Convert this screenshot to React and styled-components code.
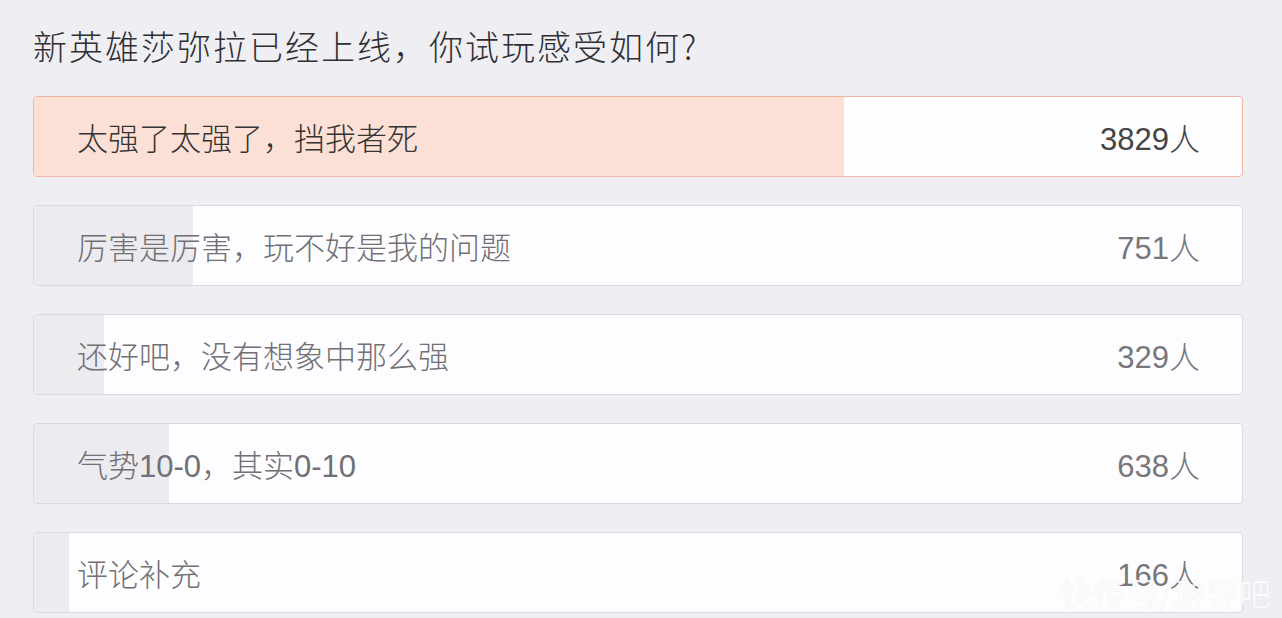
import styled, { createGlobalStyle } from "styled-components";

const GlobalStyle = createGlobalStyle`
  html, body {
    margin: 0;
    padding: 0;
    background: #efeff3;
    font-family: "Noto Sans CJK SC", "Noto Sans", sans-serif;
    overflow: hidden;
  }
`;

const Page = styled.div`
  position: relative;
  width: 1282px;
  height: 618px;
  padding: 22px 0 0 33px;
  box-sizing: border-box;
`;

const Title = styled.h1`
  margin: 0 0 26px;
  font-size: 34px;
  line-height: 48px;
  font-weight: 300;
  color: #2f2f33;
  letter-spacing: 2px;
`;

const List = styled.div`
  display: flex;
  flex-direction: column;
  gap: 28px;
  width: 1210px;
`;

const Option = styled.div`
  position: relative;
  height: 81px;
  box-sizing: border-box;
  border: 1.5px solid ${p => (p.top ? "#efb7a3" : "#d9d9df")};
  border-radius: 4px;
  background: #fdfcfe;
  overflow: hidden;
  display: flex;
  align-items: center;
  justify-content: space-between;
  padding: 0 42px 0 43px;
  font-family: "Liberation Sans", "Noto Sans CJK SC", sans-serif;
`;

const Fill = styled.div`
  position: absolute;
  left: 0;
  top: 0;
  bottom: 0;
  background: ${p => (p.top ? "#fde0d5" : "#ebebf0")};
`;

const Label = styled.span`
  position: relative;
  font-size: 31px;
  font-weight: 300;
  color: ${p => (p.top ? "#333" : "#707075")};
`;

const Count = styled.span`
  position: relative;
  font-size: 31px;
  font-weight: 300;
  color: ${p => (p.top ? "#444" : "#77777b")};
`;

const Watermark = styled.div`
  position: absolute;
  right: 10px;
  bottom: 3px;
  font-size: 32px;
  color: rgba(255, 255, 255, 0.9);
  text-shadow: 0 0 1px rgba(120, 120, 130, 0.2);
  letter-spacing: 1px;
`;

const options = [
  { label: "太强了太强了，挡我者死", count: 3829 },
  { label: "厉害是厉害，玩不好是我的问题", count: 751 },
  { label: "还好吧，没有想象中那么强", count: 329 },
  { label: "气势10-0，其实0-10", count: 638 },
  { label: "评论补充", count: 166 },
];

export default function App() {
  const total = options.reduce((s, o) => s + o.count, 0);
  return (
    <Page>
      <GlobalStyle />
      <Title>新英雄莎弥拉已经上线，你试玩感受如何?</Title>
      <List>
        {options.map((o, i) => (
          <Option key={o.label} top={i === 0}>
            <Fill top={i === 0} style={{ width: `${(o.count / total) * 100}%` }} />
            <Label top={i === 0}>{o.label}</Label>
            <Count top={i === 0}>{o.count}人</Count>
          </Option>
        ))}
      </List>
      <Watermark>快传号/游导吧</Watermark>
    </Page>
  );
}
